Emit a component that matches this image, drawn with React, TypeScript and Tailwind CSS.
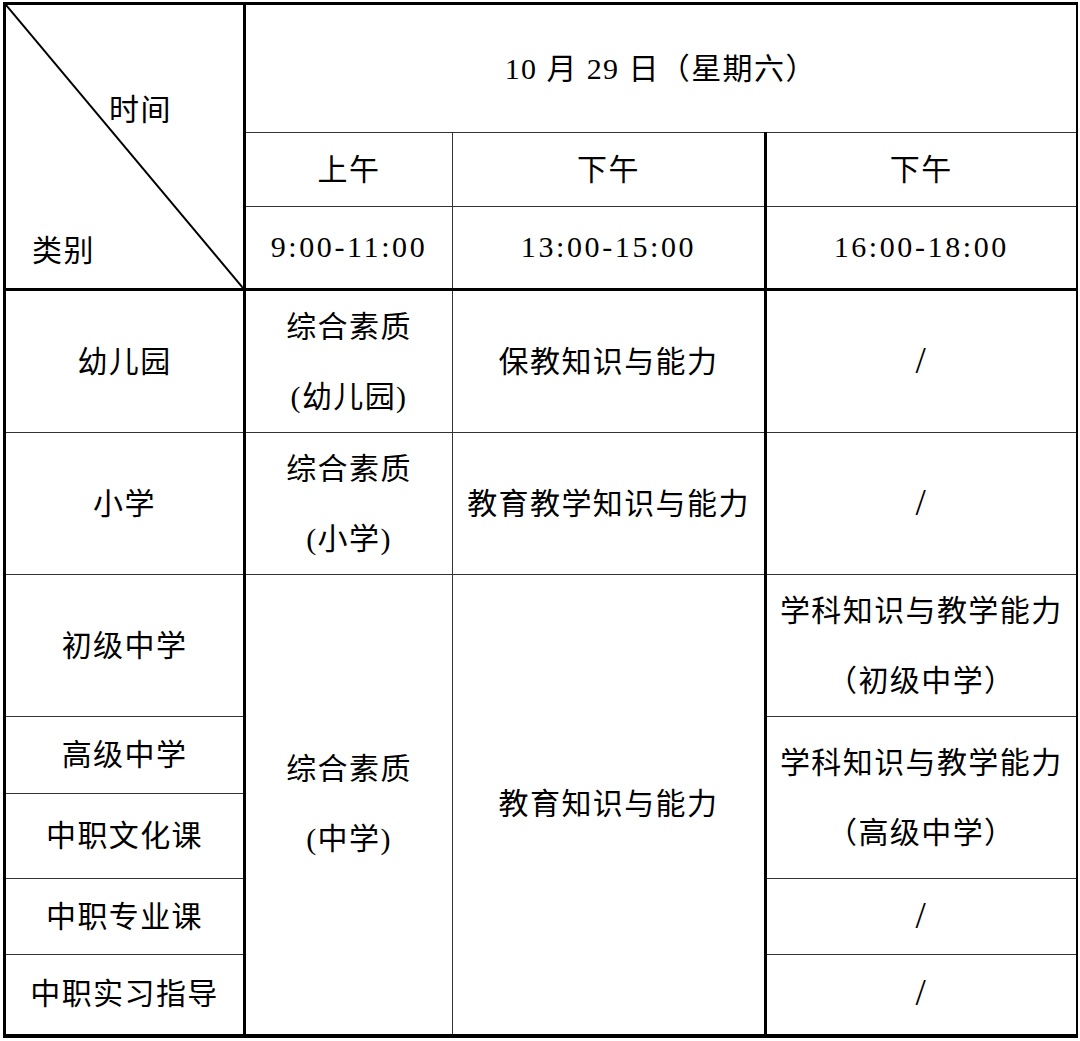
const cell = 'border border-[#333] p-0 text-center align-middle';
const c1 = 'border-l-[3px] border-l-black border-r-[3px] border-r-black';
const c3 = 'border-r-[3px] border-r-black';
const c4 = 'border-r-2 border-r-black';
const last = 'border-b-4 border-b-black';

const Two = ({ a, b }: { a: string; b: string }) => (
  <div className="flex flex-col items-center">
    <span>{a}</span>
    <span>{b}</span>
  </div>
);

const Slash = () => <span className="text-[37px]">/</span>;

const Time = ({ t }: { t: string }) => <span className="tracking-[2.6px]">{t}</span>;

const App = () => {
  return (
    <div className="min-h-[1041px] w-[1080px] bg-white pt-[2px] pl-[3px] text-black">
      <table className="w-[1072px] table-fixed border-collapse font-['Liberation_Serif','Noto_Sans_CJK_SC',serif] text-[30px] leading-[70px] tracking-[1.4px]">
        <colgroup>
          <col className="w-[240px]" />
          <col className="w-[208px]" />
          <col className="w-[313px]" />
          <col className="w-[311px]" />
        </colgroup>
        <tbody>
          <tr className="h-[129px]">
            <td rowSpan={3} className={`${cell} ${c1} border-t-[3px] border-t-black border-b-[3px] border-b-black relative`}>
              <svg className="absolute inset-0 h-full w-full" preserveAspectRatio="none" viewBox="0 0 100 100">
                <line x1="0" y1="0" x2="100" y2="100" stroke="black" strokeWidth="2" vectorEffect="non-scaling-stroke" />
              </svg>
              <div className="flex h-[283px] flex-col justify-between pt-[90px] pb-[22px] text-left leading-[30px]">
                <span className="pl-[103px]">时间</span>
                <span className="pl-[26px]">类别</span>
              </div>
            </td>
            <td colSpan={3} className={`${cell} ${c4} border-t-[3px] border-t-black`}>
              10 月 29 日（星期六）
            </td>
          </tr>
          <tr className="h-[73px]">
            <td className={cell}>上午</td>
            <td className={`${cell} ${c3}`}>下午</td>
            <td className={`${cell} ${c4}`}>下午</td>
          </tr>
          <tr className="h-[83px]">
            <td className={`${cell} border-b-[3px] border-b-black`}>
              <Time t="9:00-11:00" />
            </td>
            <td className={`${cell} ${c3} border-b-[3px] border-b-black`}>
              <Time t="13:00-15:00" />
            </td>
            <td className={`${cell} ${c4} border-b-[3px] border-b-black`}>
              <Time t="16:00-18:00" />
            </td>
          </tr>
          <tr className="h-[143px]">
            <td className={`${cell} ${c1}`}>幼儿园</td>
            <td className={cell}>
              <Two a="综合素质" b="(幼儿园)" />
            </td>
            <td className={`${cell} ${c3}`}>保教知识与能力</td>
            <td className={`${cell} ${c4}`}>
              <Slash />
            </td>
          </tr>
          <tr className="h-[142px]">
            <td className={`${cell} ${c1}`}>小学</td>
            <td className={cell}>
              <Two a="综合素质" b="(小学)" />
            </td>
            <td className={`${cell} ${c3}`}>教育教学知识与能力</td>
            <td className={`${cell} ${c4}`}>
              <Slash />
            </td>
          </tr>
          <tr className="h-[142px]">
            <td className={`${cell} ${c1}`}>初级中学</td>
            <td rowSpan={5} className={`${cell} ${last}`}>
              <Two a="综合素质" b="(中学)" />
            </td>
            <td rowSpan={5} className={`${cell} ${c3} ${last}`}>教育知识与能力</td>
            <td className={`${cell} ${c4}`}>
              <Two a="学科知识与教学能力" b="（初级中学）" />
            </td>
          </tr>
          <tr className="h-[77px]">
            <td className={`${cell} ${c1}`}>高级中学</td>
            <td rowSpan={2} className={`${cell} ${c4}`}>
              <Two a="学科知识与教学能力" b="（高级中学）" />
            </td>
          </tr>
          <tr className="h-[85px]">
            <td className={`${cell} ${c1}`}>中职文化课</td>
          </tr>
          <tr className="h-[76px]">
            <td className={`${cell} ${c1}`}>中职专业课</td>
            <td className={`${cell} ${c4}`}>
              <Slash />
            </td>
          </tr>
          <tr className="h-[81px]">
            <td className={`${cell} ${c1} ${last}`}>中职实习指导</td>
            <td className={`${cell} ${c4} ${last}`}>
              <Slash />
            </td>
          </tr>
        </tbody>
      </table>
    </div>
  );
};

export default App;
